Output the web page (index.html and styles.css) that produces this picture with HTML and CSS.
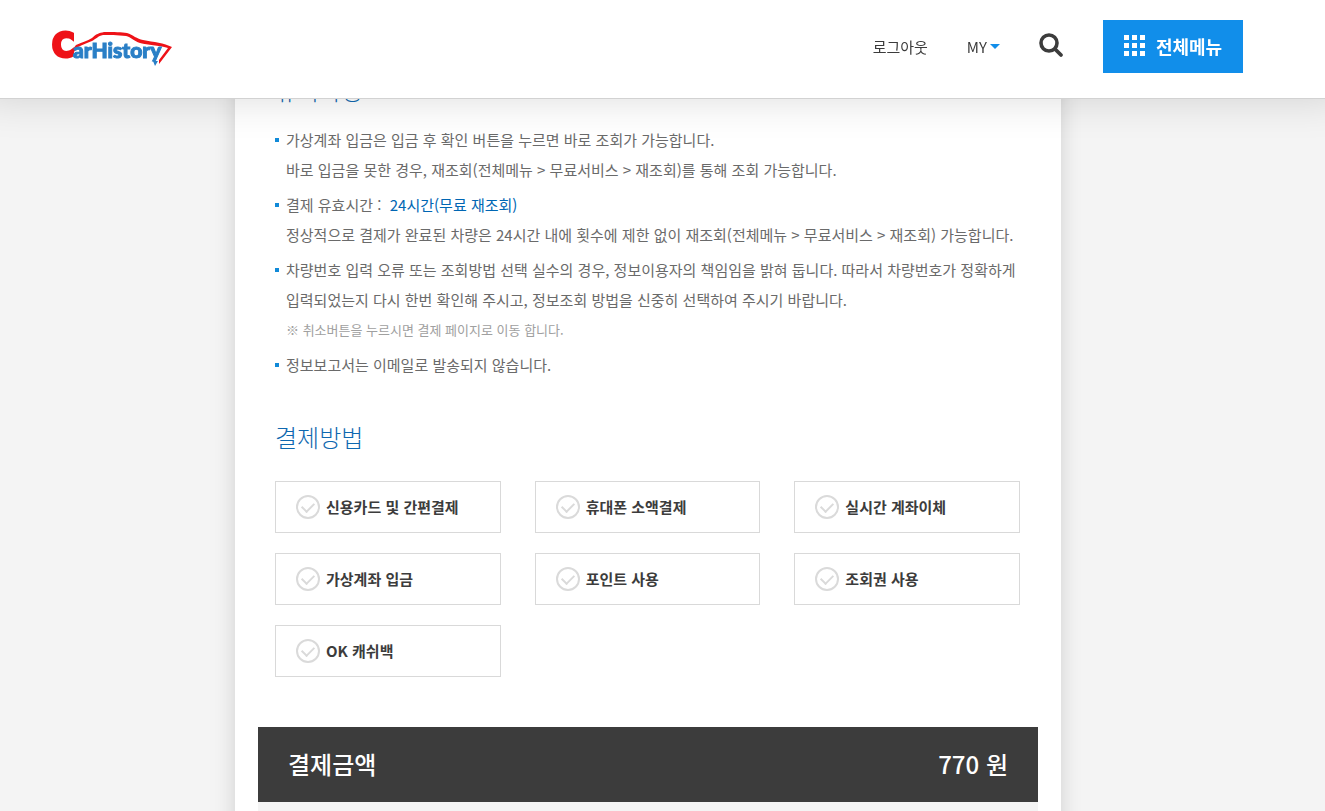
FILE: index.html
```html
<!DOCTYPE html>
<html lang="ko">
<head>
<meta charset="utf-8">
<meta name="viewport" content="width=device-width, initial-scale=1">
<title>CarHistory</title>
<link rel="stylesheet" href="styles.css">
</head>
<body>
<header class="header">
  <a class="logo" href="#" aria-label="CarHistory">
    <svg width="128" height="52" viewBox="48 22 128 52" aria-hidden="true">
      <text class="logo-c" x="52" y="58">C</text>
      <path class="logo-red" d="M66 59 L76 46 C83 43 87 42 92 39 C96 35 99 34 104 33 C114 33 122 33 127 34 C133 36 137 40 143 41 C154 43 164 44 172 48 L159 65 L159 61 L168 49 C158 46 148 46 140 44 C134 42 131 38 126 37 C118 36 108 36 103 36 C98 37 96 40 92 42 C87 44 82 46 78 48 L69 59 Z"/>
      <text class="logo-rest" x="73" y="59">arH<tspan>i</tspan>story</text>
      <path class="logo-blue" d="M153 62 L158 62 L155 67 Z"/>
    </svg>
  </a>
  <nav class="nav">
    <a class="nav-link" href="#">로그아웃</a>
    <a class="nav-link nav-my" href="#">MY<span class="caret"></span></a>
    <button class="search" type="button" aria-label="검색">
      <svg width="24" height="24" viewBox="0 0 24 24" fill="none" stroke="#3c3c3c" stroke-linecap="round" aria-hidden="true">
        <circle cx="10" cy="8" r="8" stroke-width="3.6"/>
        <path d="M16 14 L22 20" stroke-width="3.8"/>
      </svg>
    </button>
    <button class="menu" type="button">
      <svg width="21" height="21" viewBox="0 0 21 21" fill="#fff" aria-hidden="true">
        <path d="M0 0h5v5H0zM8 0h5v5H8zM16 0h5v5h-5zM0 8h5v5H0zM8 8h5v5H8zM16 8h5v5h-5zM0 16h5v5H0zM8 16h5v5H8zM16 16h5v5h-5z"/>
      </svg>
      전체메뉴
    </button>
  </nav>
</header>
<main class="page">
  <div class="sheet">
    <section class="section">
      <h2 class="title">유의사항</h2>
      <ul class="notes">
        <li>가상계좌 입금은 입금 후 확인 버튼을 누르면 바로 조회가 가능합니다.<br>바로 입금을 못한 경우, 재조회(전체메뉴 &gt; 무료서비스 &gt; 재조회)를 통해 조회 가능합니다.</li>
        <li>결제 유효시간 :&nbsp; <span class="accent">24시간(무료 재조회)</span><br>정상적으로 결제가 완료된 차량은 24시간 내에 횟수에 제한 없이 재조회(전체메뉴 &gt; 무료서비스 &gt; 재조회) 가능합니다.</li>
        <li>차량번호 입력 오류 또는 조회방법 선택 실수의 경우, 정보이용자의 책임임을 밝혀 둡니다. 따라서 차량번호가 정확하게<br>입력되었는지 다시 한번 확인해 주시고, 정보조회 방법을 신중히 선택하여 주시기 바랍니다.<small class="hint">※ 취소버튼을 누르시면 결제 페이지로 이동 합니다.</small></li>
        <li>정보보고서는 이메일로 발송되지 않습니다.</li>
      </ul>
    </section>
    <section class="section">
      <h2 class="title">결제방법</h2>
      <div class="methods">
        <label class="method"><input type="radio" name="pay">신용카드 및 간편결제</label>
        <label class="method"><input type="radio" name="pay">휴대폰 소액결제</label>
        <label class="method"><input type="radio" name="pay">실시간 계좌이체</label>
        <label class="method"><input type="radio" name="pay">가상계좌 입금</label>
        <label class="method"><input type="radio" name="pay">포인트 사용</label>
        <label class="method"><input type="radio" name="pay">조회권 사용</label>
        <label class="method"><input type="radio" name="pay">OK 캐쉬백</label>
      </div>
    </section>
    <section class="total">
      <div class="total-bar"><span>결제금액</span><span>770 원</span></div>
    </section>
  </div>
</main>
</body>
</html>
```
FILE: styles.css
```css
* {
  box-sizing: border-box;
}

body {
  margin: 0;
  height: 100vh;
  overflow: hidden;
  background: #f4f4f4;
  color: #3c3c3c;
  font-family: "Noto Sans CJK KR", "Noto Sans", sans-serif;
  font-size: 15px;
}

.header {
  position: fixed;
  z-index: 2;
  top: 0;
  left: 0;
  right: 0;
  display: flex;
  align-items: center;
  justify-content: space-between;
  padding: 20px 82px 25px 48px;
  background: #fff;
  border-bottom: 1px solid #d2d2d2;
  box-shadow: 0 -20px 40px 20px rgba(0, 0, 0, 0.14);
}

.logo svg {
  display: block;
}

.logo-c {
  fill: #ee1218;
  stroke: #ee1218;
  stroke-width: 3px;
  font-family: "Liberation Sans Narrow", "DejaVu Sans Condensed", sans-serif;
  font-size: 34px;
  font-weight: 700;
}

.logo-rest {
  fill: #2a7fc6;
  stroke: #2a7fc6;
  stroke-width: 1px;
  font-family: Lato, sans-serif;
  font-size: 21px;
  font-weight: 900;
}

.logo-red {
  fill: #ee1218;
}

.logo-blue {
  fill: #2a7fc6;
}

.nav {
  display: flex;
  align-items: center;
}

.nav-link {
  color: #3c3c3c;
  text-decoration: none;
  margin-right: 39px;
}

.nav-my {
  display: flex;
  align-items: center;
  gap: 3px;
}

.caret {
  border: 5px solid transparent;
  border-top-color: #118eea;
  border-bottom: 0;
}

.search,
.menu {
  border: 0;
  font: inherit;
  cursor: pointer;
}

.search {
  padding: 0;
  margin-right: 40px;
  background: none;
}

.search svg {
  display: block;
  overflow: visible;
}

.menu {
  display: flex;
  align-items: center;
  justify-content: center;
  gap: 11px;
  width: 140px;
  height: 53px;
  padding: 0 0 2px;
  background: #118eea;
  color: #fff;
  font-size: 18px;
  font-weight: 700;
}

.page {
  padding: 0 29px 0 0;
}

.sheet {
  max-width: 826px;
  min-height: 100vh;
  margin: 0 auto;
  padding: 70px 23px 0;
  background: #fff;
  box-shadow: 0 0 20px rgba(0, 0, 0, 0.15);
}

.section {
  padding: 0 18px 0 17px;
}

.section + .section {
  margin-top: 37px;
}

.title {
  margin: 0;
  color: #0f68b0;
  font-size: 24px;
  font-weight: 300;
  line-height: 40px;
}

.notes {
  display: grid;
  gap: 5px;
  margin: 15px 0 0;
  padding: 0;
  list-style: none;
  color: #6a6a6a;
  line-height: 30px;
}

.notes li {
  position: relative;
  padding-left: 11px;
}

.notes li::before {
  content: "";
  position: absolute;
  top: 13px;
  left: 0;
  width: 4px;
  height: 4px;
  background: #118ad8;
}

.accent {
  color: #0066b3;
}

.hint {
  display: block;
  color: #a0a0a0;
  font-size: 13px;
}

.methods {
  display: grid;
  grid-template-columns: repeat(3, 1fr);
  gap: 20px 34px;
  margin-top: 24px;
}

.method {
  display: flex;
  align-items: center;
  gap: 6px;
  height: 52px;
  padding: 0 20px;
  border: 1px solid #d9d9d9;
  font-weight: 700;
  line-height: 20px;
}

.method input {
  appearance: none;
  display: grid;
  place-items: center;
  width: 24px;
  height: 24px;
  margin: 0;
  border: 2px solid #dadada;
  border-radius: 50%;
}

.method input::before {
  content: "";
  width: 10px;
  height: 6px;
  margin-bottom: 2px;
  border: solid #dadada;
  border-width: 0 0 2px 2px;
  transform: rotate(-45deg);
}

.method input:checked,
.method input:checked::before {
  border-color: #118eea;
}

.total {
  margin-top: 50px;
  padding-bottom: 40px;
  background: #f4f4f4;
}

.total-bar {
  display: flex;
  align-items: center;
  justify-content: space-between;
  height: 75px;
  padding: 0 30px 2px;
  background: #3c3c3c;
  color: #fff;
  font-size: 24px;
  font-weight: 500;
}
```
